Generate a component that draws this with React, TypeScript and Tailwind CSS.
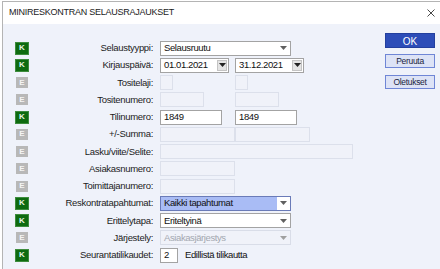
import type { ReactNode } from "react";

const font = { fontFamily: "'Liberation Sans', Arial, sans-serif" };

function Badge({ k }: { k: string }) {
  return (
    <span
      className={`flex h-[11px] w-[12px] shrink-0 items-center justify-center text-[8px] font-bold leading-none ${
        k === "K" ? "bg-[#0e6b10] text-[#e8f5e8] outline outline-1 outline-[#3d8c3d]" : "bg-[#b8b8b8] text-[#f4f4f4]"
      }`}
    >
      {k}
    </span>
  );
}

function Empty({ w }: { w: string }) {
  return <div className={`h-[15px] border border-[#dce0eb] bg-[#f0f2f9] ${w}`} />;
}

function Input({ w, value }: { w: string; value: string }) {
  return (
    <div
      className={`flex h-[15px] items-center border border-[#a3a3a3] bg-white px-[3px] text-[9.5px] tracking-[-0.4px] text-[#111] ${w}`}
    >
      {value}
    </div>
  );
}

function Arrow({ color = "#606060" }: { color?: string }) {
  return (
    <svg width="7" height="4" viewBox="0 0 7 4">
      <path d="M0 0h7L3.5 4z" fill={color} />
    </svg>
  );
}

function Select({ value, variant = "normal" }: { value: string; variant?: "normal" | "active" | "disabled" }) {
  const box =
    variant === "active"
      ? "border-[#6a7bb8] bg-[#a9bcf5] text-[#111]"
      : variant === "disabled"
      ? "border-[#d9dde8] bg-[#f0f2f9] text-[#a3a7b0]"
      : "border-[#a3a3a3] bg-white text-[#111]";
  return (
    <div className={`flex h-[15px] w-[131px] items-stretch border text-[9.5px] tracking-[-0.4px] ${box}`}>
      <span className="flex flex-1 items-center px-[3px]">{value}</span>
      <span className={`flex w-[13px] items-center justify-center ${variant === "active" ? "bg-white" : ""}`}>
        <Arrow color={variant === "disabled" ? "#a0a0a0" : "#606060"} />
      </span>
    </div>
  );
}

function DateInput({ value }: { value: string }) {
  return (
    <div className="flex h-[15px] w-[69px] items-center border border-[#a3a3a3] bg-white pl-[3px] pr-[1px] text-[9.5px] tracking-[-0.4px] text-[#111]">
      <span className="flex-1">{value}</span>
      <span className="flex h-[11px] w-[10px] items-center justify-center border border-[#c4c4c4] bg-[#e4e4e4]">
        <Arrow color="#222" />
      </span>
    </div>
  );
}

function Pair({ a, b }: { a: ReactNode; b?: ReactNode }) {
  return (
    <div className="grid grid-cols-[75px_1fr] items-center">
      <div className="flex">{a}</div>
      <div className="flex">{b}</div>
    </div>
  );
}

const rows: { k: string; label: string; field: ReactNode }[] = [
  { k: "K", label: "Selaustyyppi:", field: <Select value="Selausruutu" /> },
  {
    k: "K",
    label: "Kirjauspäivä:",
    field: <Pair a={<DateInput value="01.01.2021" />} b={<DateInput value="31.12.2021" />} />,
  },
  { k: "E", label: "Tositelaji:", field: <Pair a={<Empty w="w-[13px]" />} b={<Empty w="w-[13px]" />} /> },
  { k: "E", label: "Tositenumero:", field: <Pair a={<Empty w="w-[44px]" />} b={<Empty w="w-[44px]" />} /> },
  {
    k: "K",
    label: "Tilinumero:",
    field: <Pair a={<Input w="w-[62px]" value="1849" />} b={<Input w="w-[62px]" value="1849" />} />,
  },
  { k: "E", label: "+/-Summa:", field: <Pair a={<Empty w="w-[75px]" />} b={<Empty w="w-[75px]" />} /> },
  { k: "E", label: "Lasku/viite/Selite:", field: <Empty w="w-[193px]" /> },
  { k: "E", label: "Asiakasnumero:", field: <Empty w="w-[75px]" /> },
  { k: "E", label: "Toimittajanumero:", field: <Empty w="w-[75px]" /> },
  { k: "K", label: "Reskontratapahtumat:", field: <Select value="Kaikki tapahtumat" variant="active" /> },
  { k: "K", label: "Erittelytapa:", field: <Select value="Eriteltyinä" /> },
  { k: "E", label: "Järjestely:", field: <Select value="Asiakasjärjestys" variant="disabled" /> },
  {
    k: "K",
    label: "Seurantatilikaudet:",
    field: (
      <div className="flex items-center gap-[7px]">
        <Input w="w-[18px]" value="2" />
        <span className="text-[9.5px] tracking-[-0.4px] text-[#111]">Edillistä tilikautta</span>
      </div>
    ),
  },
];

export default function App() {
  return (
    <div className="h-[269px] w-[440px] overflow-hidden bg-white pl-[2px] pt-[1px]" style={font}>
      <div className="flex h-full flex-col border-l border-t border-[#b4b4b4]">
        <div className="flex h-[22px] shrink-0 items-center justify-between bg-white pl-[6px] pr-[5px]">
          <span className="text-[9px] tracking-[-0.25px] text-[#1a1a1a]">MINIRESKONTRAN SELAUSRAJAUKSET</span>
          <svg width="8" height="8" viewBox="0 0 8 8">
            <path d="M0.5 0.5l7 7M7.5 0.5l-7 7" stroke="#333" strokeWidth="0.9" />
          </svg>
        </div>
        <div className="flex flex-1 bg-[#eff2fa]">
          <div className="flex flex-col pl-[13px] pt-[15.5px]">
            {rows.map((r) => (
              <div key={r.label} className="flex h-[17.25px] items-center">
                <Badge k={r.k} />
                <span className="w-[125px] text-right text-[9.5px] tracking-[-0.3px] text-[#1c1c1c]">{r.label}</span>
                <div className="ml-[7px]">{r.field}</div>
              </div>
            ))}
          </div>
          <div className="ml-auto mr-[5px] flex w-[50px] flex-col gap-[6px] pt-[9px]">
            <button className="h-[15px] border border-[#233f9e] bg-[#2d4db8] text-[10px] text-white">OK</button>
            <button className="h-[14px] border border-[#6f86d6] bg-[#dde3f6] text-[8.5px] tracking-[-0.3px] text-[#1a2340]">
              Peruuta
            </button>
            <button className="mt-[1px] h-[14px] border border-[#6f86d6] bg-[#dde3f6] text-[8.5px] tracking-[-0.3px] text-[#1a2340]">
              Oletukset
            </button>
          </div>
        </div>
      </div>
    </div>
  );
}
